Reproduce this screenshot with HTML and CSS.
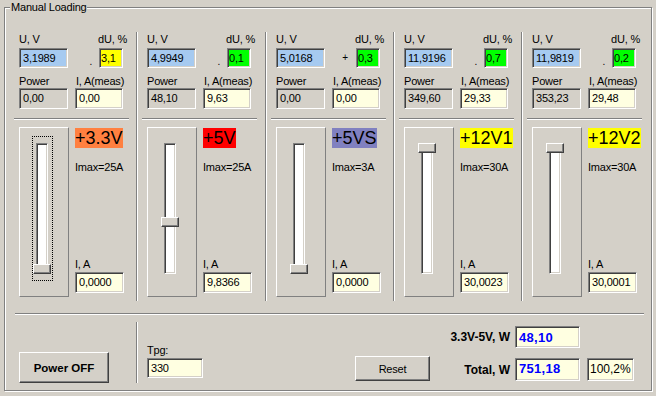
FILE: index.html
```html
<!DOCTYPE html>
<html>
<head>
<meta charset="utf-8">
<link rel="stylesheet" href="styles.css">
</head>
<body>
<div class="group">
  <span class="legend">Manual Loading</span>
  <div class="cols">
    <div class="col c1">
      <div class="top">
        <span class="lbl l-uv">U, V</span>
        <span class="lbl l-du">dU, %</span>
        <span class="edit uv">3,1989</span>
        <span class="sign">.</span>
        <span class="edit dubox yellow">3,1</span>
        <span class="lbl l-pow">Power</span>
        <span class="lbl l-meas">I, A(meas)</span>
        <span class="edit ro">0,00</span>
        <span class="edit info meas-box">0,00</span>
      </div>
      <div class="hsep"></div>
      <div class="lower">
        <div class="frame"><div class="focus on"><div class="channel"><div class="thumb" style="top:120px"></div></div></div></div>
        <div class="side">
          <span class="rail r33">+3.3V</span>
          <span class="lbl imax">Imax=25A</span>
          <span class="lbl ia">I, A</span>
          <span class="edit info ia-box">0,0000</span>
        </div>
      </div>
    </div>
    <div class="col">
      <div class="top">
        <span class="lbl l-uv">U, V</span>
        <span class="lbl l-du">dU, %</span>
        <span class="edit uv">4,9949</span>
        <span class="sign">.</span>
        <span class="edit dubox green">0,1</span>
        <span class="lbl l-pow">Power</span>
        <span class="lbl l-meas">I, A(meas)</span>
        <span class="edit ro">48,10</span>
        <span class="edit info meas-box">9,63</span>
      </div>
      <div class="hsep"></div>
      <div class="lower">
        <div class="frame"><div class="focus"><div class="channel"><div class="thumb" style="top:73px"></div></div></div></div>
        <div class="side">
          <span class="rail r5">+5V</span>
          <span class="lbl imax">Imax=25A</span>
          <span class="lbl ia">I, A</span>
          <span class="edit info ia-box">9,8366</span>
        </div>
      </div>
    </div>
    <div class="col">
      <div class="top">
        <span class="lbl l-uv">U, V</span>
        <span class="lbl l-du">dU, %</span>
        <span class="edit uv">5,0168</span>
        <span class="sign plus">+</span>
        <span class="edit dubox green">0,3</span>
        <span class="lbl l-pow">Power</span>
        <span class="lbl l-meas">I, A(meas)</span>
        <span class="edit ro">0,00</span>
        <span class="edit info meas-box">0,00</span>
      </div>
      <div class="hsep"></div>
      <div class="lower">
        <div class="frame"><div class="focus"><div class="channel"><div class="thumb" style="top:120px"></div></div></div></div>
        <div class="side">
          <span class="rail r5s">+5VS</span>
          <span class="lbl imax">Imax=3A</span>
          <span class="lbl ia">I, A</span>
          <span class="edit info ia-box">0,0000</span>
        </div>
      </div>
    </div>
    <div class="col">
      <div class="top">
        <span class="lbl l-uv">U, V</span>
        <span class="lbl l-du">dU, %</span>
        <span class="edit uv">11,9196</span>
        <span class="sign">.</span>
        <span class="edit dubox green">0,7</span>
        <span class="lbl l-pow">Power</span>
        <span class="lbl l-meas">I, A(meas)</span>
        <span class="edit ro">349,60</span>
        <span class="edit info meas-box">29,33</span>
      </div>
      <div class="hsep"></div>
      <div class="lower">
        <div class="frame"><div class="focus"><div class="channel"><div class="thumb" style="top:-1px"></div></div></div></div>
        <div class="side">
          <span class="rail r12">+12V1</span>
          <span class="lbl imax">Imax=30A</span>
          <span class="lbl ia">I, A</span>
          <span class="edit info ia-box">30,0023</span>
        </div>
      </div>
    </div>
    <div class="col last">
      <div class="top">
        <span class="lbl l-uv">U, V</span>
        <span class="lbl l-du">dU, %</span>
        <span class="edit uv">11,9819</span>
        <span class="sign">.</span>
        <span class="edit dubox green">0,2</span>
        <span class="lbl l-pow">Power</span>
        <span class="lbl l-meas">I, A(meas)</span>
        <span class="edit ro">353,23</span>
        <span class="edit info meas-box">29,48</span>
      </div>
      <div class="hsep"></div>
      <div class="lower">
        <div class="frame"><div class="focus"><div class="channel"><div class="thumb" style="top:-1px"></div></div></div></div>
        <div class="side">
          <span class="rail r12">+12V2</span>
          <span class="lbl imax">Imax=30A</span>
          <span class="lbl ia">I, A</span>
          <span class="edit info ia-box">30,0001</span>
        </div>
      </div>
    </div>
  </div>
  <div class="bline"></div>
  <div class="bottom">
    <div class="bleft">
      <button class="btn power">Power OFF</button>
    </div>
    <div class="bright">
      <div class="tpg">
        <span class="lbl">Tpg:</span>
        <span class="edit info tpg-box">330</span>
      </div>
      <button class="btn reset">Reset</button>
      <div class="sum">
        <span class="slbl">3.3V-5V, W</span>
        <span class="edit info val">48,10</span>
        <span></span>
        <span class="slbl">Total, W</span>
        <span class="edit info val">751,18</span>
        <span class="edit info pct">100,2%</span>
      </div>
    </div>
  </div>
</div>
</body>
</html>
```

FILE: styles.css
```css
* { box-sizing: border-box; }
html, body { margin: 0; padding: 0; }
body {
  width: 656px;
  height: 396px;
  background: #d4d0c8;
  font-family: "Liberation Sans", Arial, sans-serif;
  font-size: 11px;
  letter-spacing: -0.2px;
  color: #000;
  overflow: hidden;
}
.group {
  position: relative;
  margin: 7px 0 0 4px;
  width: 648px;
  height: 384px;
  border: 1px solid #808080;
  box-shadow: inset 1px 1px 0 #fff, 1px 1px 0 #fff;
}
.legend {
  position: absolute;
  left: 5px;
  top: -7px;
  padding: 0 1px;
  line-height: 13px;
  background: #d4d0c8;
  white-space: nowrap;
}
.cols {
  display: flex;
  margin-top: 24px;
  height: 269px;
}
.col {
  width: 128px;
  padding-left: 10px;
  border-left: 1px solid #808080;
  box-shadow: inset 1px 0 0 #fff;
}
.col.c1 {
  width: 131px;
  padding-left: 14px;
  border-left: 0;
  box-shadow: none;
}
.col:nth-child(2) { width: 129px; }
.col.last { flex: 1; }
.lbl {
  line-height: 13px;
  white-space: nowrap;
}
.top {
  display: grid;
  width: 108px;
  margin-top: 1px;
  grid-template-columns: 49px 7px 24px 24px 4px;
  grid-template-rows: 15px 27px 13px 21px;
  align-items: start;
}
.l-uv { grid-area: 1 / 1 / 2 / 3; }
.l-du { grid-area: 1 / 3 / 2 / 6; justify-self: end; }
.uv { grid-area: 2 / 1; }
.sign {
  grid-area: 2 / 3;
  justify-self: end;
  font-size: 10px;
  line-height: 10px;
  margin-top: 9px;
  padding-right: 7px;
}
.sign.plus { margin-top: 5px; padding-right: 8px; }
.dubox { grid-area: 2 / 4; }
.l-pow { grid-area: 3 / 1 / 4 / 3; }
.l-meas { grid-area: 3 / 3 / 4 / 6; padding-left: 1px; }
.ro { grid-area: 4 / 1; }
.meas-box { grid-area: 4 / 3 / 5 / 5; }

.edit {
  display: block;
  border: 1px solid;
  border-color: #808080 #fff #fff #808080;
  box-shadow: inset 1px 1px 0 #404040, inset -1px -1px 0 #d4d0c8;
  padding: 0 3px;
  white-space: nowrap;
  overflow: hidden;
}
.uv { height: 20px; line-height: 18px; background: #a6caf0; }
.dubox { height: 20px; line-height: 18px; padding: 0 1px; }
.yellow { background: #ffff00; }
.green { background: #00ff00; }
.ro { height: 21px; line-height: 19px; background: #d4d0c8; }
.info { background: #ffffe1; }
.meas-box { height: 21px; line-height: 19px; }

.hsep {
  margin: 9px 0 0 -5px;
  width: 115px;
  height: 2px;
  border-top: 1px solid #808080;
  border-bottom: 1px solid #fff;
}
.lower {
  display: flex;
  gap: 6px;
  align-items: flex-start;
}
.frame {
  margin-top: 7px;
  width: 50px;
  height: 170px;
  border: 1px solid;
  border-color: #fff #808080 #808080 #fff;
  padding: 8px 0 0 12px;
}
.focus {
  width: 21px;
  height: 145px;
  border: 1px dotted transparent;
  padding: 6px 0 0 3px;
}
.focus.on { border-color: #000; }
.channel {
  position: relative;
  width: 12px;
  height: 131px;
  border: 1px solid;
  border-color: #808080 #fff #fff #808080;
  box-shadow: inset 1px 1px 0 #404040, inset -1px -1px 0 #d4d0c8;
  background: #fff;
}
.thumb {
  position: absolute;
  left: -4px;
  width: 18px;
  height: 10px;
  background: #d4d0c8;
  border: 1px solid;
  border-color: #fff #404040 #404040 #fff;
  box-shadow: inset -1px -1px 0 #808080;
}
.side {
  margin-top: 8px;
  height: 165px;
  display: flex;
  flex-direction: column;
  align-items: flex-start;
}
.rail {
  height: 20px;
  font-size: 18px;
  line-height: 20px;
  letter-spacing: 0;
  white-space: nowrap;
}
.r33 { background: #ff8040; }
.r5 { background: #ff0000; }
.r5s { background: #8080c0; }
.r12 { background: #ffff00; }
.imax { margin-top: 13px; }
.ia { margin-top: auto; }
.ia-box {
  margin-top: 1px;
  width: 49px;
  height: 21px;
  line-height: 19px;
}

.bline {
  margin: 12px 0 0 10px;
  width: 629px;
  height: 2px;
  border-top: 1px solid #808080;
  border-bottom: 1px solid #fff;
}
.bottom {
  display: flex;
  height: 75px;
  align-items: flex-start;
}
.bleft {
  margin-top: 7px;
  width: 132px;
  height: 61px;
  padding-left: 14px;
  border-right: 1px solid #808080;
  box-shadow: 1px 0 0 #fff;
  display: flex;
  align-items: flex-end;
}
.btn {
  display: flex;
  align-items: center;
  justify-content: center;
  margin: 0;
  padding: 0;
  background: #d4d0c8;
  border: 1px solid;
  border-color: #fff #404040 #404040 #fff;
  box-shadow: inset -1px -1px 0 #808080;
  font-family: "Liberation Sans", Arial, sans-serif;
  color: #000;
}
.power {
  width: 90px;
  height: 31px;
  font-size: 11.5px;
  font-weight: bold;
  letter-spacing: 0;
}
.bright {
  display: flex;
  align-items: flex-start;
}
.tpg {
  margin: 29px 0 0 10px;
  display: flex;
  flex-direction: column;
}
.tpg-box {
  margin-top: 1px;
  width: 56px;
  height: 20px;
  line-height: 18px;
}
.reset {
  margin: 41px 0 0 152px;
  width: 75px;
  height: 25px;
  font-size: 11px;
  letter-spacing: -0.2px;
}
.sum {
  margin-top: 11px;
  display: grid;
  grid-template-columns: 80px 65px 49px;
  grid-template-rows: 22px 23px;
  column-gap: 5px;
  row-gap: 10px;
  align-items: center;
}
.slbl {
  justify-self: end;
  font-weight: bold;
  font-size: 12px;
  letter-spacing: 0;
  white-space: nowrap;
}
.val {
  height: 100%;
  line-height: 20px;
  color: #0000ff;
  font-weight: bold;
  font-size: 13px;
  letter-spacing: 0.3px;
}
.sum .val:nth-of-type(2) { line-height: 21px; }
.pct {
  margin-left: 2px;
  height: 23px;
  line-height: 21px;
  padding: 0 2px;
  font-size: 12px;
  letter-spacing: 0;
}
```
